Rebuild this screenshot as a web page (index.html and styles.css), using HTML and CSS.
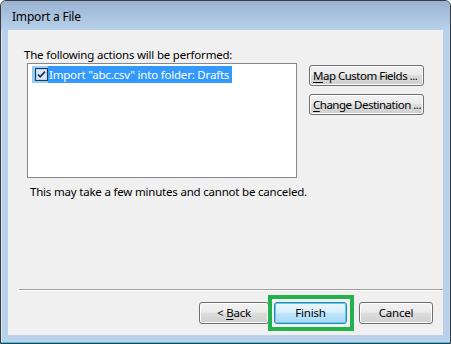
FILE: index.html
```html
<!DOCTYPE html>
<html>
<head>
<meta charset="utf-8">
<link rel="stylesheet" href="styles.css">
</head>
<body>
<div class="window">
  <div class="titlebar"><span class="title">Import a File</span></div>
  <div class="client">
    <p class="heading">The following actions will be performed:</p>
    <div class="main">
      <div class="listbox">
        <div class="item">
          <span class="check">
            <svg width="13" height="13" viewBox="0 0 13 13">
              <rect x="0.5" y="0.5" width="12" height="12" fill="#dbe9f7" stroke="#1c3a5c"/>
              <rect x="1.5" y="1.5" width="10" height="10" fill="none" stroke="#b9d3ee"/>
              <path d="M3 6.5 L5.2 8.8 L10 3.6" fill="none" stroke="#1c3a5c" stroke-width="1.8"/>
            </svg>
          </span>
          <span class="label">Import "abc.csv" into folder: Drafts</span>
        </div>
      </div>
      <div class="side">
        <button class="btn side-btn"><u>M</u>ap Custom Fields ...</button>
        <button class="btn side-btn"><u>C</u>hange Destination ...</button>
      </div>
    </div>
    <p class="note">This may take a few minutes and cannot be canceled.</p>
    <div class="sep"></div>
    <div class="footer">
      <button class="btn back">&lt; <u>B</u>ack</button>
      <div class="highlight"><button class="btn finish">Finish</button></div>
      <button class="btn cancel">Cancel</button>
    </div>
  </div>
</div>
</body>
</html>
```
FILE: styles.css
```css
html, body {
  margin: 0;
  padding: 0;
  background: #ffffff;
}
body {
  font-family: "Noto Sans", "DejaVu Sans", sans-serif;
  font-size: 11.5px;
  letter-spacing: -0.2px;
  color: #000;
}
.window {
  box-sizing: border-box;
  width: 451px;
  height: 344px;
  border: 1px solid #3c3c3c;
  border-radius: 6px 6px 0 0;
  background: #b9d1ea;
  box-shadow: inset 0 -1px 0 #36c6ef, inset 1px 1px 0 #dbe7f3;
  display: flex;
  flex-direction: column;
  overflow: hidden;
}
.titlebar {
  height: 29px;
  flex: none;
  background: linear-gradient(#98b3d1, #b9d1ea);
  display: flex;
  align-items: center;
  padding-left: 11px;
  border-radius: 5px 5px 0 0;
}
.title {
  font-size: 12px;
  margin-top: 1px;
  color: #000;
}
.client {
  margin: 0 7px 0 7px;
  height: 305px;
  background: #f0f0f0;
  display: flex;
  flex-direction: column;
  box-sizing: border-box;
}
.heading {
  margin: 17px 0 0 16px;
  line-height: 16px;
}
.main {
  display: flex;
  margin-top: 0;
}
.listbox {
  box-sizing: border-box;
  width: 270px;
  height: 115px;
  margin-left: 19px;
  border: 1px solid #828790;
  background: #ffffff;
  padding-top: 2px;
}
.item {
  display: flex;
  align-items: stretch;
  height: 17px;
  margin-left: 4px;
}
.check {
  width: 16px;
  background: #99c9f5;
  display: flex;
  align-items: center;
  justify-content: center;
}
.check svg {
  display: block;
  margin-left: 2px;
}
.label {
  background: #3399ff;
  color: #ffffff;
  padding: 0 3px 0 1px;
  line-height: 17px;
  white-space: nowrap;
}
.side {
  display: flex;
  flex-direction: column;
  gap: 8px;
  margin-left: 12px;
  padding-top: 2px;
}
.btn {
  box-sizing: border-box;
  font-family: "Noto Sans", "DejaVu Sans", sans-serif;
  font-size: 11.5px;
  letter-spacing: -0.2px;
  color: #000;
  border: 1px solid #707070;
  border-radius: 3px;
  background: linear-gradient(#f2f2f2 0%, #ebebeb 45%, #dddddd 50%, #cfcfcf 100%);
  box-shadow: inset 0 0 0 1px #fcfcfc;
  padding: 0;
  height: 22px;
  line-height: 18px;
}
.btn u {
  text-decoration: underline;
  text-underline-offset: 2px;
}
.side-btn {
  width: 115px;
  height: 21px;
  text-align: left;
  padding-left: 3px;
  letter-spacing: -0.5px;
  white-space: nowrap;
  overflow: hidden;
}
.note {
  margin: 6px 0 0 22px;
  line-height: 16px;
}
.sep {
  margin: auto 0 0 11px;
  border-top: 1px solid #a0a0a0;
  border-bottom: 1px solid #ffffff;
  height: 0;
}
.footer {
  display: flex;
  align-items: center;
  justify-content: flex-end;
  padding: 4px 10px 4px 0;
}
.back {
  width: 70px;
  margin-right: -1px;
}
.highlight {
  border: 4px solid #22b14c;
  padding: 3px 3px 3px 2px;
  display: flex;
}
.finish {
  width: 73px;
  border-color: #3c7fb1;
  box-shadow: inset 0 0 0 1px #48d4f6;
  background: linear-gradient(#eaf6fd 0%, #d9f0fc 45%, #bee6fd 50%, #a7d9f5 100%);
}
.cancel {
  width: 74px;
  margin-left: 5px;
}
```
